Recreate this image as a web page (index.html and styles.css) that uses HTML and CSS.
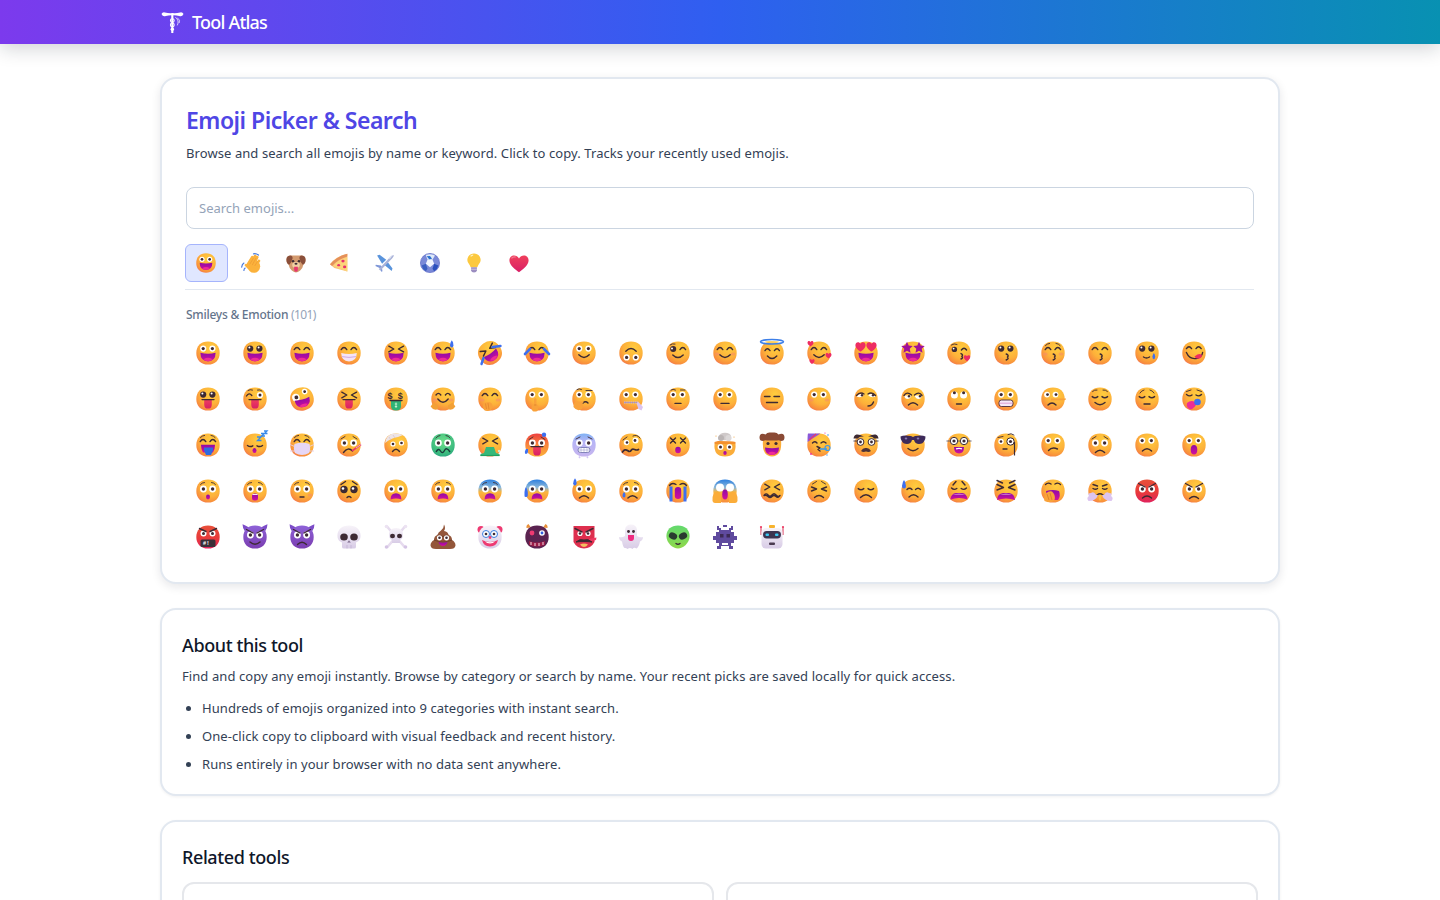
FILE: index.html
```html
<!DOCTYPE html>
<html lang="en">
<head>
<meta charset="utf-8">
<title>Emoji Picker &amp; Search - Tool Atlas</title>
<link rel="stylesheet" href="styles.css">
</head>
<body>
<svg class="defs" aria-hidden="true">
<defs>
<radialGradient id="gf" cx=".62" cy=".3" r=".8"><stop offset="0" stop-color="#ffcd3e"/><stop offset=".55" stop-color="#fdb13a"/><stop offset=".85" stop-color="#f88d3c"/><stop offset="1" stop-color="#ee6d62"/></radialGradient>
<radialGradient id="gg" cx=".5" cy=".35" r=".8"><stop offset="0" stop-color="#6fe08a"/><stop offset=".7" stop-color="#37b77e"/><stop offset="1" stop-color="#1f8f80"/></radialGradient>
<linearGradient id="gl" x1="0" y1="0" x2="0" y2="1"><stop offset="0" stop-color="#62d96e"/><stop offset="1" stop-color="#8fd84a"/></linearGradient>
<linearGradient id="gr" x1="0" y1="0" x2="0" y2="1"><stop offset="0" stop-color="#e8503a"/><stop offset=".55" stop-color="#e83a3a"/><stop offset="1" stop-color="#e0245e"/></linearGradient>
<linearGradient id="gh" x1="0" y1="0" x2="0" y2="1"><stop offset="0" stop-color="#ee3f3f"/><stop offset=".5" stop-color="#f8853c"/><stop offset="1" stop-color="#fbb03a"/></linearGradient>
<linearGradient id="gc" x1="0" y1="0" x2="0" y2="1"><stop offset="0" stop-color="#7fb2f4"/><stop offset=".35" stop-color="#b7b5f6"/><stop offset="1" stop-color="#c6b5ef"/></linearGradient>
<linearGradient id="gb" x1="0" y1="0" x2="0" y2="1"><stop offset="0" stop-color="#2b7fe0"/><stop offset=".35" stop-color="#8db8d8"/><stop offset=".55" stop-color="#fbb53c"/><stop offset="1" stop-color="#f88d3c"/></linearGradient>
<linearGradient id="gp" x1="0" y1="0" x2="0" y2="1"><stop offset="0" stop-color="#8e62d8"/><stop offset="1" stop-color="#7a3db0"/></linearGradient>
<linearGradient id="gm" x1="0" y1="0" x2="0" y2="1"><stop offset="0" stop-color="#8f0aa8"/><stop offset="1" stop-color="#d4109a"/></linearGradient>
<linearGradient id="gs" x1="0" y1="0" x2="0" y2="1"><stop offset="0" stop-color="#f7f3f9"/><stop offset="1" stop-color="#d8cce6"/></linearGradient>
<linearGradient id="gt" x1="0" y1="0" x2="0" y2="1"><stop offset="0" stop-color="#f0405c"/><stop offset="1" stop-color="#d81f66"/></linearGradient>
<path id="shape" d="M12 .4C19.2.4 23.7 4.8 23.7 12S19.2 23.6 12 23.6.3 19.2.3 12 4.8.4 12 .4z"/>
<use id="f" href="#shape" fill="url(#gf)"/>
<use id="fg" href="#shape" fill="url(#gg)"/>
<use id="fr" href="#shape" fill="url(#gr)"/>
<use id="fh" href="#shape" fill="url(#gh)"/>
<use id="fc" href="#shape" fill="url(#gc)"/>
<use id="fb" href="#shape" fill="url(#gb)"/>
<use id="fp" href="#shape" fill="url(#gp)"/>
<g id="ew"><circle cx="7.2" cy="7.6" r="3.1" fill="#fff"/><circle cx="16.4" cy="7.6" r="3.1" fill="#fff"/><circle cx="7.2" cy="7.6" r="1.6" fill="#3d2a33"/><circle cx="16.4" cy="7.6" r="1.6" fill="#3d2a33"/></g>
<g id="el"><circle cx="7.4" cy="10" r="3.4" fill="#fff"/><circle cx="16.6" cy="10" r="3.4" fill="#fff"/><circle cx="7.4" cy="10" r="1.7" fill="#3d2a33"/><circle cx="16.6" cy="10" r="1.7" fill="#3d2a33"/></g>
<g id="ed"><circle cx="7.2" cy="7.6" r="3.1" fill="#3d2a33"/><circle cx="16.4" cy="7.6" r="3.1" fill="#3d2a33"/><circle cx="6.4" cy="6.6" r="1" fill="#fff"/><circle cx="15.6" cy="6.6" r="1" fill="#fff"/></g>
<path id="eh" class="s" d="M4.2 8.6Q7 4.4 9.8 8.6M14 8.6Q16.8 4.4 19.6 8.6"/>
<path id="ex" class="s" d="M4.8 5.2 9.8 8 4.8 10.8M19.6 5.2 14.4 8 19.6 10.8"/>
<path id="ec" class="s" d="M4.2 9.6Q7 12 9.8 9.6M14 9.6Q16.8 12 19.6 9.6"/>
<path id="bw" class="t" d="M4.4 4.6Q6 2.6 8.6 2.4M15 2.4Q17.6 2.6 19.2 4.6"/>
<path id="ms" class="s" d="M6.8 13.8Q12 19.2 17.2 13.8"/>
<path id="mn" class="s" d="M8 16.4H16"/>
<path id="mf" class="s" d="M7.4 18Q12 13.4 16.6 18"/>
<path id="mk" class="s" d="M12.2 13Q15.4 14.4 13.4 16Q15.4 17.6 12.2 19"/>
<g id="mo"><path d="M4.4 11.8Q12 13.6 19.6 11.8Q19.6 20.4 12 20.4T4.4 11.8z" fill="url(#gm)"/><path d="M7.6 18.2Q12 15.4 16.4 18.2Q14.4 20.2 12 20.2T7.6 18.2z" fill="#ee2c96"/></g>
<g id="mg"><path d="M4.2 12Q12 13.8 19.8 12Q19.6 20.4 12 20.4T4.2 12z" fill="#f4e4f8"/><path d="M4.8 15.6Q12 17.2 19.2 15.6" fill="none" stroke="#c79ad8" stroke-width=".8"/></g>
<ellipse id="ma" cx="12" cy="17.4" rx="2" ry="2.5" fill="url(#gm)"/>
<path id="mw" d="M6.6 20.4Q6.6 14.2 12 14.2T17.4 20.4Q12 18.6 6.6 20.4z" fill="url(#gm)"/>
<g id="mt"><path d="M6 12.2H18V12.8H15.8V17.4Q15.8 21.6 12 21.6T8.2 17.4V12.8H6z" fill="url(#gt)"/><path class="s" d="M6 12.6H18"/></g>
<g id="sw"><path d="M19 4.2Q19.4.6 20.8-.8Q22.4.6 22.4 4.2Q22.2 6.4 20.7 6.4T19 4.2z" fill="#3d6ff0"/></g>
<g id="sl"><path d="M1.2 4.2Q1.6.6 3-.8Q4.6.6 4.6 4.2Q4.4 6.4 2.9 6.4T1.2 4.2z" fill="#3d6ff0"/></g>
<path id="he" d="M0 -1.6C.6-3 3-3 3-.8 3 1 1 2.2 0 3-1 2.2-3 1-3-.8-3-3-.6-3 0-1.6z" fill="#ee2c62"/>
<ellipse id="bl" cx="4.2" cy="13" rx="2.4" ry="1.6" fill="#f58a6a" opacity=".55"/>
<ellipse id="br" cx="20" cy="13" rx="2.4" ry="1.6" fill="#f58a6a" opacity=".55"/>
<path id="star" d="M0-4.4 1.3-1.6 4.4-1.2 2.1.9 2.7 4 0 2.5-2.7 4-2.1.9-4.4-1.2-1.3-1.6z" fill="#a0109a"/>
<path id="horn" d="M1.8 6Q-.6 3-.4-.8 3 .4 6 2.6zM22.2 6Q24.6 3 24.4-.8 21 .4 18 2.6z" fill="#7c4cc8"/>
</defs>
</svg>

<header class="topbar">
  <div class="topbar-inner">
    <svg class="logo" viewBox="0 0 24 24" aria-hidden="true">
      <path d="M.5 3.200Q1.500 1 4 1.500 8 2.600 12 2.200 16 2.600 20 1.500 22.500 1 23.500 3.200 22 6.400 19 5.200 15.500 4.400 12 4.600 8.500 4.400 5 5.200 2 6.400.5 3.200z" fill="#fff"/>
      <path d="M11.800 4V23" stroke="#fff" stroke-width="2.200"/>
      <circle cx="11.800" cy="10" r="2" fill="none" stroke="#fff" stroke-width="1.100"/>
      <circle cx="11.800" cy="14.500" r="2" fill="none" stroke="#fff" stroke-width="1.100"/>
      <circle cx="11.800" cy="19" r="1.800" fill="#fff"/>
      <path d="M15 6.500Q19.500 10 17 15M17 7Q20.500 9.500 19 12.500" fill="none" stroke="#fff" stroke-width="1" opacity=".75"/>
    </svg>
    <span class="brand">Tool Atlas</span>
  </div>
</header>

<main class="page">
  <section class="card card-main">
    <h1 class="tool-title">Emoji Picker &amp; Search</h1>
    <p class="tool-desc">Browse and search all emojis by name or keyword. Click to copy. Tracks your recently used emojis.</p>
    <input class="search" type="text" placeholder="Search emojis...">
    <nav class="tabs">
      <button class="tab active"><svg viewBox="0 0 24 24"><use href="#f"/><use href="#ew"/><use href="#mo"/></svg></button>
      <button class="tab"><svg viewBox="0 0 24 24"><ellipse cx="15.500" cy="16" rx="7.500" ry="7.800" fill="#fbb23c"/><path d="M8.500 13 13.500 5M11 15 17 3.500M14 16 19.500 5M17 17 21.500 9.500M9.500 18 6 14.500" stroke="#fbb23c" stroke-width="3.200" stroke-linecap="round"/><path d="M10.500 13.500 15 6M13.500 14.500 18 6M16.500 15.500 20 10" stroke="#ea9330" stroke-width=".7"/><path d="M.8 17Q1.200 13.500 3.500 12M3.500 21Q3.500 19 5 18M15 1Q18 .2 21 2.500" fill="none" stroke="#4a7bdd" stroke-width="1.400" stroke-linecap="round"/></svg></button>
      <button class="tab"><svg viewBox="0 0 24 24"><path d="M6 3H18Q23 3 23.500 8 23.500 12 21 13.500 20 19 17 21 14 23.500 12 23.500T7 21Q4 19 3 13.500 .5 12 .5 8 1 3 6 3z" fill="#d39a6e"/><path d="M6 3Q.5 3 .5 8 .5 13 4 14 7 11 8 6 8 4 6 3zM18 3Q23.500 3 23.500 8 23.500 13 20 14 17 11 16 6 16 4 18 3z" fill="#8a4f3a"/><circle cx="8.500" cy="10" r="1.500" fill="#3d2a33"/><circle cx="15.500" cy="10" r="1.500" fill="#3d2a33"/><ellipse cx="12" cy="14.400" rx="4.600" ry="3.600" fill="#f0cfa4"/><ellipse cx="12" cy="13" rx="1.800" ry="1.200" fill="#3d2a33"/><path d="M9.800 16.400H14.200V20Q14.200 22.400 12 22.400T9.800 20z" fill="#e8356e"/></svg></button>
      <button class="tab"><svg viewBox="0 0 24 24"><g transform="translate(-1.300 -.8) scale(1.300 1.100)"><path d="M1 13Q6 4.500 17 1.500V21L5 17z" fill="#f8c27a"/><path d="M4 15Q8 8 17 5V21z" fill="#fcd47a"/><path d="M1 13Q8 4 17 1.500V4.500Q8 7.500 3 15z" fill="#e5905a"/><circle cx="13" cy="9.500" r="1.500" fill="#e82f6e"/><circle cx="9" cy="14" r="1.300" fill="#e82f6e"/><circle cx="14.500" cy="16" r="1.500" fill="#e82f6e"/></g></svg></button>
      <button class="tab"><svg viewBox="0 0 24 24"><path d="M13.500 8 5.500 2 2.500 3 8.500 13zM15 10.500 21 18.500 20 21.500 11 14z" fill="#5a94dc"/><path d="M7 15 1 14 .5 15.500 5.500 18 7.500 22.500 9 22 8 16z" fill="#7f97d8"/><path d="M4.500 19.500 18.500 4.500Q21 2 22.500 2.500 23 4 20.500 6.500L6.500 21z" fill="#aab3d8"/><path d="M16.500 7 18.500 4.500Q21 2 22.500 2.500 20 3.500 18 7z" fill="#e3e7f6"/></svg></button>
      <button class="tab"><svg viewBox="0 0 24 24"><circle cx="12" cy="12" r="11.500" fill="#7a89d8"/><circle cx="12" cy="12" r="11.500" fill="none" stroke="#5a66c4" stroke-width=".8"/><path d="M7 2.500Q12 .5 18 3L15 8H9z" fill="#dfeaf8"/><path d="M9 8H15L17 13 12 17 7 13z" fill="#f2f5fd"/><path d="M2 15 7 13 9 19 7 22Q3 20 2 15z" fill="#3a5ec0"/><path d="M22 15 17 13 15 19 17 22Q21 20 22 15z" fill="#2b50bc"/><path d="M8 4 11 7.500 14.500 7 12 3.500z" fill="#2a6fce"/></svg></button>
      <button class="tab"><svg viewBox="0 0 24 24"><path d="M12 .5C17 .5 20 4.500 20 8.500 20 12 17 13.500 16 17H8C7 13.500 4 12 4 8.500 4 4.500 7 .5 12 .5z" fill="#fcc93f"/><path d="M8 4Q9 2.500 11 2.500" fill="none" stroke="#fff2c0" stroke-width="1.500"/><path d="M8.500 17H15.500V21Q15 23.500 12 23.500T8.500 21z" fill="#9b8dc0"/><path d="M8.500 19.500H15.500" stroke="#d6cde8"/></svg></button>
      <button class="tab"><svg viewBox="0 0 24 24"><path d="M12 6.500C14.500 1.500 23.500 1.500 23.500 9 23.500 15 16 20 12 23 8 20 .5 15 .5 9 .5 1.500 9.500 1.500 12 6.500z" fill="url(#gt)"/><path d="M3 6.500Q5 4 8 5" fill="none" stroke="#f47a92" stroke-width="1.500"/></svg></button>
    </nav>
    <h2 class="group-label">Smileys &amp; Emotion <span class="count">(101)</span></h2>
    <div class="emoji-grid">
      <!-- row 1 -->
      <button class="emoji"><svg viewBox="0 0 24 24"><use href="#f"/><use href="#ew"/><use href="#mo"/></svg></button>
      <button class="emoji"><svg viewBox="0 0 24 24"><use href="#f"/><use href="#ed"/><use href="#mo"/></svg></button>
      <button class="emoji"><svg viewBox="0 0 24 24"><use href="#f"/><use href="#eh"/><use href="#mo"/></svg></button>
      <button class="emoji"><svg viewBox="0 0 24 24"><use href="#f"/><use href="#eh"/><use href="#mg"/></svg></button>
      <button class="emoji"><svg viewBox="0 0 24 24"><use href="#f"/><use href="#ex"/><use href="#mo"/></svg></button>
      <button class="emoji"><svg viewBox="0 0 24 24"><use href="#f"/><use href="#eh"/><use href="#mo"/><use href="#sw"/></svg></button>
      <button class="emoji"><svg viewBox="0 0 24 24"><g transform="rotate(-35 12 12)"><use href="#f"/><use href="#ex"/><use href="#mo"/></g><path d="M14.500 6 22.500 5M5.500 17 3.500 23" stroke="#3d6ff0" stroke-width="2.400" stroke-linecap="round"/></svg></button>
      <button class="emoji"><svg viewBox="0 0 24 24"><use href="#f"/><use href="#eh"/><use href="#mo"/><path d="M19 8 24 13M5 8 0 13" stroke="#3d6ff0" stroke-width="2.600" stroke-linecap="round"/></svg></button>
      <button class="emoji"><svg viewBox="0 0 24 24"><use href="#f"/><use href="#ew"/><use href="#ms"/></svg></button>
      <button class="emoji"><svg viewBox="0 0 24 24"><use href="#f"/><g transform="rotate(180 12 12)"><use href="#ew"/><use href="#ms"/></g></svg></button>
      <button class="emoji"><svg viewBox="0 0 24 24"><use href="#f"/><circle cx="7.200" cy="8" r="3" fill="#3d2a33"/><circle cx="6" cy="7.500" r="1" fill="#fff"/><path class="s" d="M14 8.600Q16.800 4.400 19.600 8.600M6.800 14Q12 19.200 17.200 14"/><path class="t" d="M4 4Q6 2.200 9 3"/></svg></button>
      <button class="emoji"><svg viewBox="0 0 24 24"><use href="#f"/><use href="#eh"/><use href="#ms"/><use href="#br"/><use href="#bl"/></svg></button>
      <button class="emoji"><svg viewBox="0 0 24 24"><use href="#f"/><path class="s" d="M5 9.600Q7.400 6 10 9.600M14.400 9.600Q17 6 19.400 9.600M7.400 15Q12 20 16.800 15"/><ellipse cx="12" cy=".8" rx="11.500" ry="2.200" fill="none" stroke="#3d7fe8" stroke-width="1.500"/><ellipse cx="12" cy=".8" rx="7" ry=".9" fill="#fcd464"/></svg></button>
      <button class="emoji"><svg viewBox="0 0 24 24"><use href="#f"/><use href="#eh"/><use href="#ms"/><use href="#he" transform="translate(3.500 2.500)"/><use href="#he" transform="translate(21.500 14.500)"/><use href="#he" transform="translate(5 20.500) scale(.85)"/></svg></button>
      <button class="emoji"><svg viewBox="0 0 24 24"><use href="#f"/><use href="#mo"/><use href="#he" transform="translate(6.500 5.500) scale(1.700)"/><use href="#he" transform="translate(17.500 5.500) scale(1.700)"/></svg></button>
      <button class="emoji"><svg viewBox="0 0 24 24"><use href="#f"/><use href="#mo"/><use href="#star" transform="translate(6 6.500) scale(1.300)"/><use href="#star" transform="translate(18 6.500) scale(1.300)"/></svg></button>
      <button class="emoji"><svg viewBox="0 0 24 24"><use href="#f"/><circle cx="7.400" cy="8.400" r="2.700" fill="#3d2a33"/><circle cx="6.600" cy="7.600" r=".9" fill="#fff"/><path class="s" d="M14.400 9Q17 5.400 19.600 9M14 12.600Q16.600 13.800 14.800 15.400 16.600 17 14 18"/><path class="t" d="M4.400 4Q7 2 10 3.400"/><use href="#he" transform="translate(20 17) scale(1.100)"/></svg></button>
      <button class="emoji"><svg viewBox="0 0 24 24"><use href="#f"/><use href="#ed"/><use href="#mk"/></svg></button>
      <button class="emoji"><svg viewBox="0 0 24 24"><use href="#f"/><use href="#eh"/><use href="#bw"/><use href="#mk"/><use href="#bl"/><use href="#br"/></svg></button>
      <button class="emoji"><svg viewBox="0 0 24 24"><use href="#f"/><use href="#eh"/><use href="#mk"/></svg></button>
      <button class="emoji"><svg viewBox="0 0 24 24"><use href="#f"/><use href="#ed"/><path class="s" d="M8.500 16Q11.500 18 14.500 16"/><path d="M17.400 15.600Q18 13 18.800 12 20 13 20.200 15.600 20.200 18.200 18.800 18.200T17.400 15.600z" fill="#3d6ff0"/></svg></button>
      <button class="emoji"><svg viewBox="0 0 24 24"><use href="#f"/><path class="s" d="M4.400 7.600Q7 4 9.600 7.600M14 7.600Q16.600 4 19.200 7.600M4.400 11.500Q8 19.500 16 17 20 15.500 20.600 11.500"/><path d="M12.500 15.500Q17 12 19.500 13.500 21 16 17.500 17.500 14.500 18.500 12.500 15.500z" fill="#ee2c62"/></svg></button>
      <!-- row 2 -->
      <button class="emoji"><svg viewBox="0 0 24 24"><use href="#f"/><use href="#ed"/><use href="#mt"/></svg></button>
      <button class="emoji"><svg viewBox="0 0 24 24"><use href="#f"/><path class="s" d="M3.500 9Q6 5 8.800 8.500"/><path class="t" d="M5 3.500Q7 2 9.500 3M14.500 3Q17 2.200 19 4"/><circle cx="17" cy="8" r="3.100" fill="#fff"/><circle cx="17" cy="8" r="1.500" fill="#3d2a33"/><use href="#mt"/></svg></button>
      <button class="emoji"><svg viewBox="0 0 24 24"><g transform="rotate(-15 12 12)"><use href="#f"/><circle cx="6.500" cy="9" r="3.800" fill="#fff"/><circle cx="7" cy="9" r="1.900" fill="#3d2a33"/><circle cx="16.500" cy="5.500" r="2.800" fill="#fff"/><circle cx="16.500" cy="5.500" r="1.400" fill="#3d2a33"/><use href="#mo"/></g></svg></button>
      <button class="emoji"><svg viewBox="0 0 24 24"><use href="#f"/><use href="#ex"/><use href="#mt"/></svg></button>
      <button class="emoji"><svg viewBox="0 0 24 24"><use href="#f"/><text class="dollar" x="3.600" y="11.500">$</text><text class="dollar" x="13.800" y="11.500">$</text><path d="M7 13.500H17V19Q17 23.500 12 23.500T7 19z" fill="#2fb276"/><path class="s" d="M6 13.500H18"/><path d="M12 15.500V21M10.800 17H13.200M10.800 19.500H13.200" stroke="#d6f7dc" stroke-width=".8"/></svg></button>
      <button class="emoji"><svg viewBox="0 0 24 24"><use href="#f"/><path class="s" d="M5 8Q7.400 4.800 9.800 8M14.400 8Q16.800 4.800 19.200 8M6.800 12Q12 18.400 17.200 12"/><use href="#bl"/><use href="#br"/><path d="M-.4 19.500 2.500 15.500 7 18.500 7 22Q3 24.500-.4 19.500z" fill="#f2a036"/><path d="M24.400 19.500 21.500 15.500 17 18.500 17 22Q21 24.500 24.400 19.500z" fill="#f2a036"/></svg></button>
      <button class="emoji"><svg viewBox="0 0 24 24"><use href="#f"/><use href="#eh"/><use href="#br"/><use href="#bl"/><path d="M6 23Q4 20 5 17.500 7 15 10 15 14 15 14.500 18.500 14.500 23 11 23.800 8 24.500 6 23z" fill="#f9a23a"/><path d="M7.500 16.500 8.500 22M10 16 11 22.500" stroke="#e07f2e" stroke-width=".7"/></svg></button>
      <button class="emoji"><svg viewBox="0 0 24 24"><use href="#f"/><use href="#ew"/><path d="M7.500 24Q6 20 7 18L9 17.500V12.500Q9 11 10.200 11 11.500 11 11.500 12.500V17.500L13 18Q14 21 12.500 24 9.500 25 7.500 24z" fill="#f9a23a"/><path d="M9.200 18H11.300" stroke="#d67c2a" stroke-width=".7"/></svg></button>
      <button class="emoji"><svg viewBox="0 0 24 24"><use href="#f"/><use href="#ew"/><path class="t" d="M5 2.500Q7 1 9.500 2.500M14 3.500 20 3.500"/><path class="s" d="M11 16Q13.500 13.500 16 16"/><path d="M1.500 20Q1 16.500 3 15 5 14 6 14.500L11.500 14.500Q12 16 10 16.500 12 18 10 22 5 25 1.500 20z" fill="#f9a23a"/></svg></button>
      <button class="emoji"><svg viewBox="0 0 24 24"><use href="#f"/><use href="#ew"/><path d="M5 15.500H19" stroke="#c7b7e8" stroke-width="2.200" stroke-dasharray="1.500 .7"/><path d="M5 15.500H19" stroke="#8a7bc0" stroke-width=".5"/><path d="M19 14.500 24 20 22.500 23.500 19.500 22 17.500 16.500z" fill="#dcc4f0"/></svg></button>
      <button class="emoji"><svg viewBox="0 0 24 24"><use href="#f"/><use href="#ew"/><path class="t" d="M5 3Q7 1.500 9.500 3M14.500 3H19"/><path class="s" d="M9 16.400H15"/></svg></button>
      <button class="emoji"><svg viewBox="0 0 24 24"><use href="#f"/><use href="#ew"/><use href="#mn"/></svg></button>
      <button class="emoji"><svg viewBox="0 0 24 24"><use href="#f"/><path class="s" d="M4.500 9.500H10M14 9.500H19.500M6.500 15.500H17.500"/></svg></button>
      <button class="emoji"><svg viewBox="0 0 24 24"><use href="#f"/><use href="#ew"/><use href="#bl"/><use href="#br"/></svg></button>
      <button class="emoji"><svg viewBox="0 0 24 24"><use href="#f"/><path d="M2.500 9.500Q6 5.500 10 8 7 11.500 2.500 9.500zM14 8Q18 5.500 21.500 9.500 17 11.500 14 8z" fill="#fff"/><circle cx="8" cy="8.300" r="1.200" fill="#3d2a33"/><circle cx="19" cy="8.300" r="1.200" fill="#3d2a33"/><path class="s" d="M2.500 8.500Q6 4.500 10 7M14 7Q18 4.500 21.500 8.500M14 19Q18 19 19.500 15"/></svg></button>
      <button class="emoji"><svg viewBox="0 0 24 24"><use href="#f"/><path d="M3 8.500H10.500Q9 12 6.500 12T3 8.500zM13.500 8.500H21Q20 12 17.500 12T13.500 8.500z" fill="#fff"/><circle cx="8" cy="9.300" r="1.200" fill="#3d2a33"/><circle cx="19" cy="9.300" r="1.200" fill="#3d2a33"/><path class="s" d="M3 8.500Q6 4 10.500 8M13.500 8Q18 4 21 8.500"/><use href="#mf"/></svg></button>
      <button class="emoji"><svg viewBox="0 0 24 24"><use href="#f"/><circle cx="7.400" cy="8" r="3.500" fill="#fff"/><circle cx="16.600" cy="8" r="3.500" fill="#fff"/><circle cx="7.400" cy="5.800" r="1.500" fill="#3d2a33"/><circle cx="16.600" cy="5.800" r="1.500" fill="#3d2a33"/><path class="s" d="M9.500 17H14.500"/></svg></button>
      <button class="emoji"><svg viewBox="0 0 24 24"><use href="#f"/><use href="#ew"/><rect x="5" y="13" width="14" height="6.500" rx="2.500" fill="#f6e8f8" stroke="#4a2a3c" stroke-width=".9"/><path d="M5.500 16.200H18.500" stroke="#d88ac8" stroke-width=".8"/></svg></button>
      <button class="emoji"><svg viewBox="0 0 24 24"><use href="#f"/><circle cx="6" cy="7.600" r="2.900" fill="#fff"/><circle cx="14.500" cy="7.600" r="2.900" fill="#fff"/><circle cx="6.500" cy="7.600" r="1.400" fill="#3d2a33"/><circle cx="15" cy="7.600" r="1.400" fill="#3d2a33"/><path d="M10 11.500 25 11.500Q25 13 23.500 13.300L10 13.500z" fill="#f9a23a"/><path class="s" d="M7 18Q11 14 15 18"/></svg></button>
      <button class="emoji"><svg viewBox="0 0 24 24"><use href="#f"/><path class="t" d="M4.500 4.500Q6.500 2.500 9 3M15 3Q17.500 2.500 19.500 4.500"/><use href="#ec"/><path class="s" d="M7 15.500Q12 20 17 15.500"/></svg></button>
      <button class="emoji"><svg viewBox="0 0 24 24"><use href="#f"/><path class="t" d="M5 6Q6.500 3.500 9 3M15 3Q17.500 3.500 19 6"/><use href="#ec"/><path class="s" d="M9 17H15"/></svg></button>
      <button class="emoji"><svg viewBox="0 0 24 24"><use href="#f"/><path class="s" d="M4.500 7.500Q7.500 10 10 8M14 8Q17 10 19.500 7.500"/><path class="t" d="M4.500 4.500 9 3M15 3 19.500 4.500"/><path d="M5 16Q9 12.500 13 15 15 17 13 19.500 10 23 7.500 22Q4 20 5 16z" fill="#ee2c96"/><circle cx="15.500" cy="15" r="3.300" fill="#3d6ff0"/></svg></button>
      <!-- row 3 -->
      <button class="emoji"><svg viewBox="0 0 24 24"><use href="#f"/><use href="#eh"/><use href="#bw"/><path d="M5 11.800H19Q19 17 17 19.500H7Q5 17 5 11.800z" fill="url(#gm)"/><path d="M8 14.500H17V17.500L15 22H10L8 17.500z" fill="#2f6ae0"/></svg></button>
      <button class="emoji"><svg viewBox="0 0 24 24"><use href="#f"/><path class="s" d="M4.500 12.500Q7 14.500 9.800 12.800M14 12.800Q17 14.500 19.500 12.500"/><use href="#ma" transform="translate(-.500 0)"/><path d="M14 4 18 4 14.500 7.500H18.500M18 .5H21.500L18.500 3H22M21-2H24L21.500.5H24.500" fill="none" stroke="#3a8be8" stroke-width="1.300"/></svg></button>
      <button class="emoji"><svg viewBox="0 0 24 24"><use href="#f"/><use href="#eh"/><use href="#bw"/><path d="M4.500 11Q12 8.500 19.500 11 21 16 19 20 12 24 5 20 3 16 4.500 11z" fill="#e6d6f5"/><path d="M0 11.500 4.500 13.500M0 18 5 18M24 11.500 19.500 13.500M24 18 19 18" stroke="#e8cfe8" stroke-width=".9"/></svg></button>
      <button class="emoji"><svg viewBox="0 0 24 24"><use href="#f"/><use href="#el"/><path class="t" d="M4 6 8 3.500M20 6 16 3.500"/><path class="s" d="M6.500 19.500Q11 13.500 15.500 18"/><path d="M15 18 24 11.500" stroke="#e83a6a" stroke-width="1.600"/><path d="M19 15 24 11.500" stroke="#f5d4c8" stroke-width=".8"/></svg></button>
      <button class="emoji"><svg viewBox="0 0 24 24"><use href="#f"/><circle cx="9" cy="11" r="2.600" fill="#fff"/><circle cx="17.500" cy="10" r="2.600" fill="#fff"/><circle cx="9" cy="11" r="1.300" fill="#3d2a33"/><circle cx="17.500" cy="10" r="1.300" fill="#3d2a33"/><path class="s" d="M8.500 18.500Q12 14 15.500 18.500"/><path d="M1 10Q2 2 9 .5 16 0 19 2L14 4Q7 5 1 10z" fill="#ede4e6"/><path d="M5 4 7 7M9 2 11 5" stroke="#d8c4c8" stroke-width=".8"/></svg></button>
      <button class="emoji"><svg viewBox="0 0 24 24"><use href="#fg"/><use href="#el"/><path class="t" d="M5 5Q6.500 2.500 9 2.500M15 2.500Q17.500 2.500 19 5"/><path d="M5 19Q7.500 14.500 9.500 18T13.500 17.500 19 19" fill="none" stroke="#1a3a3a" stroke-width="1.400"/></svg></button>
      <button class="emoji"><svg viewBox="0 0 24 24"><use href="#f"/><use href="#ex"/><path d="M8 14H16L18 20 21.500 21V23H2.500V21L6 20z" fill="#35b87a"/><path d="M2.500 22.500H21.500" stroke="#1fa060" stroke-width="1.200"/><circle cx="21" cy="18" r="1.200" fill="#cfeeda"/></svg></button>
      <button class="emoji"><svg viewBox="0 0 24 24"><use href="#fh"/><use href="#el"/><path class="t" d="M4 6.500 8 4M20 6.500 16 4"/><use href="#mt" transform="translate(0 1)"/><circle cx="19" cy="1.800" r="2.200" fill="#3d6ff0"/><path d="M1 16Q-1 19 .5 21 3 21 3 18V16z" fill="#3d6ff0"/></svg></button>
      <button class="emoji"><svg viewBox="0 0 24 24"><use href="#fc"/><use href="#el"/><path class="t" d="M4 6 8 4M20 6 16 4"/><rect x="6" y="14.500" width="12" height="5" rx="2.500" fill="#fff" stroke="#6a6ca8" stroke-width=".8"/><path d="M6.500 17H17.500M9 14.500V19.500M12 14.500V19.500M15 14.500V19.500" stroke="#8c8ec4" stroke-width=".5"/><path d="M7 23.500 8 25M16 23.500 15 25" stroke="#d2c4f5" stroke-width="1.500"/></svg></button>
      <button class="emoji"><svg viewBox="0 0 24 24"><use href="#f"/><circle cx="7.500" cy="9.500" r="2.700" fill="#fff"/><circle cx="16.500" cy="7.500" r="3" fill="#fff"/><circle cx="8" cy="9.500" r="1.300" fill="#3d2a33"/><circle cx="16" cy="7.500" r="1.400" fill="#3d2a33"/><path class="t" d="M4 7 8 4M14 3Q18 1 21 5"/><path d="M3.500 19Q6 15.500 8.500 17.500T12 17.500 15.500 16.500 19.500 16.500" fill="none" stroke="#3d2a33" stroke-width="1.700" stroke-linecap="round"/></svg></button>
      <button class="emoji"><svg viewBox="0 0 24 24"><use href="#f"/><path class="s" d="M4.500 5 9.500 10M9.500 5 4.500 10M14.500 5 19.500 10M19.500 5 14.500 10"/><ellipse cx="12" cy="17" rx="2.800" ry="3.300" fill="url(#gm)"/></svg></button>
      <button class="emoji"><svg viewBox="0 0 24 24"><path d="M1.500 11H22.500Q23.500 23.500 12 23.500T1.500 11z" fill="#fbad3a"/><path d="M1.500 9 5 8Q19 8 22.500 9V11H1.500z" fill="#f3902e"/><ellipse cx="12" cy="3.500" rx="6" ry="3.800" fill="#cfc9c9"/><circle cx="8" cy="5" r="3" fill="#bab4b4"/><circle cx="15.500" cy="5" r="3.100" fill="#dcd8d8"/><circle cx="7.500" cy="14" r="2.900" fill="#fff"/><circle cx="16.500" cy="14" r="2.900" fill="#fff"/><circle cx="7.500" cy="14" r="1.500" fill="#3d2a33"/><circle cx="16.500" cy="14" r="1.500" fill="#3d2a33"/><ellipse cx="12" cy="20" rx="1.700" ry="2" fill="url(#gm)"/><circle cx="3" cy="3" r=".6" fill="#f3a33a"/><circle cx="21" cy="4" r=".6" fill="#f3a33a"/></svg></button>
      <button class="emoji"><svg viewBox="0 0 24 24"><path d="M3 7H21Q22.500 23.500 12 23.500T3 7z" fill="#fbad3a"/><path d="M-.5 4.500Q-.5 1 2.500 .8 4 .8 5.500 1.500 7 -.5 9.500-.5H14.500Q17 -.5 18.500 1.500 20 .8 21.500.8 24.500 1 24.500 4.500 24.500 8 21 8 19 7 17 7.500H7Q5 7 3 8-.5 8-.5 4.500z" fill="#8a4a35"/><circle cx="8" cy="10.500" r="1.600" fill="#3d2a33"/><circle cx="16" cy="10.500" r="1.600" fill="#3d2a33"/><path d="M5 14.500Q12 16 19 14.500 19 22 12 22T5 14.500z" fill="url(#gm)"/><path d="M8 20Q12 17.500 16 20 14 22 12 22T8 20z" fill="#ee2c96"/></svg></button>
      <button class="emoji"><svg viewBox="0 0 24 24"><use href="#f"/><path d="M.5 9Q.5 2 1 .5H9L13.500.5Q6 5 .5 9z" fill="#8a58d8"/><path d="M2 7 9 1" stroke="#e83a6a" stroke-width="1.200"/><path class="s" d="M5.500 10Q7.500 7.500 10 10M14 10Q16.500 7.500 19 10M10 13.500 13 15 11 16.500 13 18"/><path d="M13 16H20" stroke="#3d9be8" stroke-width="1.600"/><circle cx="20.500" cy="15" r="2.500" fill="none" stroke="#3d9be8" stroke-width="1.200"/><circle cx="21" cy="2" r=".8" fill="#3d9be8"/><circle cx="18" cy="0" r=".6" fill="#ee2c96"/><circle cx="4" cy="21" r=".9" fill="#ee2c96"/><circle cx="20" cy="22" r=".7" fill="#3d9be8"/></svg></button>
      <button class="emoji"><svg viewBox="0 0 24 24"><use href="#f"/><path d="M-.5 5.500Q0 2 2.500 1.500 5 1 10 3.500 5 3 4 5.500zM24.500 5.500Q24 2 21.500 1.500 19 1 14 3.500 19 3 20 5.500z" fill="#3d2a33"/><circle cx="6.500" cy="9" r="3.400" fill="#fff" stroke="#3d2a33" stroke-width="1"/><circle cx="17.500" cy="9" r="3.400" fill="#fff" stroke="#3d2a33" stroke-width="1"/><circle cx="6.500" cy="9" r="1.400" fill="#3d2a33"/><circle cx="17.500" cy="9" r="1.400" fill="#3d2a33"/><path d="M7 18Q9 14.500 12 15 15 14.500 17 18 15 19.500 12 18.500 9 19.500 7 18z" fill="#4a3138"/><path d="M-.5 8H3M24.500 8H21" stroke="#3d2a33" stroke-width=".9"/></svg></button>
      <button class="emoji"><svg viewBox="0 0 24 24"><use href="#f"/><path d="M-.5 3.500Q3 1.600 10 3L12 4 14 3Q21 1.600 24.500 3.500 24.500 6 23.500 7.500 22 11 18 11 14 11 13 7H11Q10 11 6 11 2 11 .5 7.500-.5 6-.5 3.500z" fill="#3d2a5a"/><ellipse cx="5" cy="5.500" rx="1.300" ry=".9" fill="#8878b0"/><ellipse cx="17" cy="5.500" rx="1.300" ry=".9" fill="#8878b0"/><path class="s" d="M7 15.500Q12 20 17 15.500"/></svg></button>
      <button class="emoji"><svg viewBox="0 0 24 24"><use href="#f"/><circle cx="7" cy="8" r="3.700" fill="#fff" stroke="#3d2a33" stroke-width="1"/><circle cx="17" cy="8" r="3.700" fill="#fff" stroke="#3d2a33" stroke-width="1"/><circle cx="7" cy="8" r="1.600" fill="#3d2a33"/><circle cx="17" cy="8" r="1.600" fill="#3d2a33"/><path d="M-.5 8H3.500M24.500 8H20.500M10.500 8H13.500" stroke="#6a6068" stroke-width="1"/><path d="M7 14H17Q17 20.500 12 20.500T7 14z" fill="url(#gm)"/><path d="M9 15.800Q12 15 15 15.800" stroke="#fff" stroke-width="1.200" fill="none"/></svg></button>
      <button class="emoji"><svg viewBox="0 0 24 24"><use href="#f"/><circle cx="7" cy="8.500" r="2.700" fill="#fff"/><circle cx="7" cy="8.500" r="1.300" fill="#3d2a33"/><circle cx="16.500" cy="8.500" r="3.700" fill="#fff" stroke="#3d2a33" stroke-width="1"/><circle cx="16.500" cy="8.500" r="1.600" fill="#3d2a33"/><path class="t" d="M4 4.500 9 3.500M14 1.500Q17 -.5 20 2"/><path class="s" d="M9 16H13"/><path d="M20.500 9V22.500" stroke="#3d2a33" stroke-width="1.200"/></svg></button>
      <button class="emoji"><svg viewBox="0 0 24 24"><use href="#f"/><use href="#ew"/><path class="s" d="M7.500 17.500Q11 13.500 16.500 16"/></svg></button>
      <button class="emoji"><svg viewBox="0 0 24 24"><use href="#f"/><use href="#el"/><path class="t" d="M4 6 8 3.500M20 6 16 3.500"/><use href="#mf" transform="translate(0 1.500)"/></svg></button>
      <button class="emoji"><svg viewBox="0 0 24 24"><use href="#f"/><use href="#ew"/><use href="#mf"/></svg></button>
      <button class="emoji"><svg viewBox="0 0 24 24"><use href="#f"/><use href="#ew"/><ellipse cx="12" cy="16.800" rx="3.300" ry="4.800" fill="url(#gm)"/></svg></button>
      <!-- row 4 -->
      <button class="emoji"><svg viewBox="0 0 24 24"><use href="#f"/><use href="#el"/><path class="t" d="M4.500 5.500Q6 3.500 8.500 3.500M15.500 3.500Q18 3.500 19.500 5.500"/><ellipse cx="12" cy="18" rx="2" ry="2.400" fill="url(#gm)"/></svg></button>
      <button class="emoji"><svg viewBox="0 0 24 24"><use href="#f"/><use href="#el"/><path class="t" d="M4.500 5.500Q6 3.500 8.500 3.500M15.500 3.500Q18 3.500 19.500 5.500"/><rect x="9" y="14.500" width="6" height="7" rx="2.500" fill="url(#gm)"/><path d="M9.500 15.500H14.500" stroke="#f4e4f8" stroke-width="1"/></svg></button>
      <button class="emoji"><svg viewBox="0 0 24 24"><use href="#f"/><use href="#el"/><path class="t" d="M4.500 5.500Q6 3.500 8.500 3.500M15.500 3.500Q18 3.500 19.500 5.500"/><path class="s" d="M10 18H14"/><use href="#br" transform="translate(0 3)"/></svg></button>
      <button class="emoji"><svg viewBox="0 0 24 24"><use href="#f"/><circle cx="7" cy="10.500" r="3.700" fill="#3d2a33"/><circle cx="17" cy="10.500" r="3.700" fill="#3d2a33"/><circle cx="6" cy="9.500" r="1.300" fill="#fff"/><circle cx="16" cy="9.500" r="1.300" fill="#fff"/><path class="s" d="M4 5.500 8.500 2.500M20 5.500 15.500 2.500M10 18.500Q12 16.500 14 18.500"/></svg></button>
      <button class="emoji"><svg viewBox="0 0 24 24"><use href="#f"/><use href="#el"/><use href="#mw"/></svg></button>
      <button class="emoji"><svg viewBox="0 0 24 24"><use href="#f"/><use href="#el"/><path class="t" d="M4.500 5.500Q6 3.500 8.500 3.500M15.500 3.500Q18 3.500 19.500 5.500"/><use href="#mw"/></svg></button>
      <button class="emoji"><svg viewBox="0 0 24 24"><use href="#fb"/><use href="#el"/><path class="t" d="M4.500 5.500Q6 3.500 8.500 3.500M15.500 3.500Q18 3.500 19.500 5.500"/><use href="#mw"/></svg></button>
      <button class="emoji"><svg viewBox="0 0 24 24"><use href="#fb"/><use href="#el"/><use href="#mw"/><path d="M-.5 13Q-.5 10 1 8 2.500 10 2.800 13V16.500Q2.800 18 1 18T-.5 16.500z" fill="#3d6ff0"/></svg></button>
      <button class="emoji"><svg viewBox="0 0 24 24"><use href="#f"/><use href="#el"/><use href="#sl"/><use href="#mf" transform="translate(0 1)"/></svg></button>
      <button class="emoji"><svg viewBox="0 0 24 24"><use href="#f"/><use href="#el"/><path class="t" d="M4.500 5.500Q6 3.500 8.500 3.500M15.500 3.500Q18 3.500 19.500 5.500"/><use href="#mf" transform="translate(1.500 1)"/><path d="M3.500 16Q4 14 5 13 6.500 14 6.500 16 6.500 18.500 5 18.500T3.500 16z" fill="#3d6ff0"/></svg></button>
      <button class="emoji"><svg viewBox="0 0 24 24"><use href="#f"/><path class="s" d="M3.500 6.500Q6 3 10 5.500M14 5.500Q18 3 20.500 6.500"/><path d="M3.500 7.500H6.500V22.500H3.500zM17.500 7.500H20.500V22.500H17.500z" fill="#3d6ff0"/><rect x="8.800" y="8" width="6.400" height="12" rx="3.200" fill="url(#gm)"/></svg></button>
      <button class="emoji"><svg viewBox="0 0 24 24"><use href="#fb"/><circle cx="7" cy="8.500" r="4" fill="#fff"/><circle cx="17" cy="8.500" r="4" fill="#fff"/><ellipse cx="12" cy="15.500" rx="2.800" ry="5" fill="url(#gm)"/><path d="M-.5 22Q-1 18 .5 15 3 12 6 13 9 18 8 24H2Q0 24-.5 22zM24.500 22Q25 18 23.500 15 21 12 18 13 15 18 16 24H22Q24 24 24.500 22z" fill="#fbad3a"/></svg></button>
      <button class="emoji"><svg viewBox="0 0 24 24"><use href="#f"/><use href="#ex"/><path class="s" d="M4 16.500Q6 13.500 8 16T12 16 16 16 20 16.500Q18 19.500 16 17.500T12 17.500 8 17.500 4 16.500z"/></svg></button>
      <button class="emoji"><svg viewBox="0 0 24 24"><use href="#f"/><path class="s" d="M4.500 8 9.500 10 4.500 12M19.500 8 14.500 10 19.500 12M7.500 18.500Q12 14.500 16.500 18.500"/><path class="t" d="M5.500 5Q8 3.500 9.500 2.500M14.500 2.500Q16 3.500 18.500 5"/></svg></button>
      <button class="emoji"><svg viewBox="0 0 24 24"><use href="#f"/><use href="#ec"/><path class="s" d="M6.500 18.500Q12 13 17.500 18.500"/></svg></button>
      <button class="emoji"><svg viewBox="0 0 24 24"><use href="#f"/><path class="s" d="M6 10.500Q8.500 8 11 10.500M14.500 10.500Q17 8 19.500 10.500M8 18Q12.500 13.500 17 18"/><path d="M1 7Q1.500 2.500 3 1 4.500 2.500 5 7 5 9.500 3 9.500T1 7z" fill="#3d6ff0"/></svg></button>
      <button class="emoji"><svg viewBox="0 0 24 24"><use href="#f"/><path class="s" d="M4.500 9Q7 11.500 9.800 9.500M14.200 9.500Q17 11.500 19.500 9M6 6 9 2.500M18 6 15 2.500"/><path d="M3.500 20.500Q4 14.500 9 14H15Q20 14.500 20.500 20.500Q12 17.500 3.500 20.500z" fill="url(#gm)"/><path d="M5.500 15.500H18.500Q12 14 5.500 15.500z" fill="#f4cfe8"/></svg></button>
      <button class="emoji"><svg viewBox="0 0 24 24"><use href="#f"/><path class="s" d="M3 5.500 9.500 8.500 3 11M21 5.500 14.500 8.500 21 11M3 1.500 8.500 4M21 1.500 15.500 4"/><path d="M3 21Q3.500 14.500 9 14H15Q20.500 14.500 21 21Q12 18 3 21z" fill="url(#gm)"/><path d="M6 15.500H18Q12 14 6 15.500z" fill="#f4cfe8"/></svg></button>
      <button class="emoji"><svg viewBox="0 0 24 24"><use href="#f"/><path class="s" d="M4.500 5.500Q7 3 10 5M14 5Q17 3 19.500 5.500"/><path d="M5 12Q12 10 18 12 20 17 17 21H8Q5 17 5 12z" fill="url(#gm)"/><path d="M3.500 22Q2.500 17 5 14.500 8 11.500 11 12.500 15 16.500 13.500 21 10 25 3.500 22z" fill="#f9a23a"/><path d="M6 15 8 21M9 14 11 21" stroke="#d67c2a" stroke-width=".8"/></svg></button>
      <button class="emoji"><svg viewBox="0 0 24 24"><use href="#f"/><path class="s" d="M5 5.500 9.500 7M19 5.500 14.500 7M5 9.500Q7.500 11 9.500 9.500M14.500 9.500Q17 11 19 9.500M9 16Q12 13.500 15 16"/><path d="M11 16H13V21Q12 22 11 21z" fill="#fbc03a"/><path d="M10 16Q8 22 .5 22-2 19 1 17-1 14 3 14 6 12 8 16zM14 16Q16 22 23.500 22 26 19 23 17 25 14 21 14 18 12 16 16z" fill="#dcc4f0"/></svg></button>
      <button class="emoji"><svg viewBox="0 0 24 24"><use href="#fr"/><use href="#el"/><path class="s" d="M3.500 4.500 10 8M20.500 4.500 14 8M7.500 19Q12 15 16.500 19"/></svg></button>
      <button class="emoji"><svg viewBox="0 0 24 24"><use href="#f"/><use href="#el"/><path class="s" d="M3.500 4.500 10 8M20.500 4.500 14 8M7.500 19.500Q12 15.500 16.500 19.500"/></svg></button>
      <!-- row 5 -->
      <button class="emoji"><svg viewBox="0 0 24 24"><use href="#fr"/><circle cx="7.500" cy="8.500" r="3" fill="#fff"/><circle cx="16.500" cy="8.500" r="3" fill="#fff"/><circle cx="7.500" cy="8.500" r="1.500" fill="#3d2a33"/><circle cx="16.500" cy="8.500" r="1.500" fill="#3d2a33"/><path class="s" d="M3.500 3.500 10 6.500M20.500 3.500 14 6.500"/><rect x="4.500" y="14.500" width="15" height="7.500" rx="1.500" fill="#3a3038"/><text class="sym" x="7" y="20.300">#!</text></svg></button>
      <button class="emoji"><svg viewBox="0 0 24 24"><use href="#horn"/><use href="#fp"/><use href="#el"/><path class="s" d="M3.500 4.500 10 8M20.500 4.500 14 8M7 17Q12 21.500 17 17"/></svg></button>
      <button class="emoji"><svg viewBox="0 0 24 24"><use href="#horn"/><use href="#fp"/><use href="#el"/><path class="s" d="M3.500 4.500 10 8M20.500 4.500 14 8M7.500 19.500Q12 15 16.500 19.500"/></svg></button>
      <button class="emoji"><svg viewBox="0 0 24 24"><path d="M12 .4C19 .4 23.600 4.500 23.600 10.500 23.600 14.500 21.500 16.500 19 17.500V22Q19 23.600 17 23.600H7Q5 23.600 5 22V17.500C2.500 16.500.4 14.500.4 10.500.4 4.500 5 .4 12 .4z" fill="url(#gs)"/><ellipse cx="7" cy="12" rx="3.800" ry="3.500" fill="#3d2a33"/><ellipse cx="17" cy="12" rx="3.800" ry="3.500" fill="#3d2a33"/><path d="M10.500 17.500 12 15.500 13.500 17.500zM10 20V23.500M14 20V23.500" fill="#4a3a50" stroke="#b9a8cc" stroke-width=".6"/></svg></button>
      <button class="emoji"><svg viewBox="0 0 24 24"><path d="M3 1.500 21 22.500M21 1.500 3 22.500" stroke="#e6dbee" stroke-width="2.600"/><circle cx="2.500" cy="1.500" r="1.800" fill="#ece3f2"/><circle cx="21.500" cy="1.500" r="1.800" fill="#ece3f2"/><circle cx="2.500" cy="22" r="1.800" fill="#d4c4e4"/><circle cx="21.500" cy="22" r="1.800" fill="#d4c4e4"/><path d="M12 3C17 3 19 6 19 10 19 13 17.500 14 16 15V18H8V15C6.500 14 5 13 5 10 5 6 7 3 12 3z" fill="url(#gs)"/><ellipse cx="8.500" cy="11" rx="2.500" ry="2.300" fill="#3d2a33"/><ellipse cx="15.500" cy="11" rx="2.500" ry="2.300" fill="#3d2a33"/></svg></button>
      <button class="emoji"><svg viewBox="0 0 24 24"><path d="M13-.5Q15 3 13 6 17 6.500 17.500 10 21 11 21 15 24.500 17 24.500 20.500 24 24 19 24H5Q0 24-.5 20.500-.5 17 3 15 3 11 6.500 10 7 7 10 5.500 13 3 13-.5z" fill="#93563a"/><path d="M6.500 10Q12 13 17.500 10M3 15Q12 19 21 15" fill="none" stroke="#6f3d2a" stroke-width=".9"/><circle cx="8.500" cy="12.800" r="2.600" fill="#fff"/><circle cx="15.500" cy="12.800" r="2.600" fill="#fff"/><circle cx="8.500" cy="12.800" r="1.300" fill="#3d2a33"/><circle cx="15.500" cy="12.800" r="1.300" fill="#3d2a33"/><path d="M7.500 17Q12 18.500 16.500 17 15.500 21 12 21T7.500 17z" fill="url(#gm)"/></svg></button>
      <button class="emoji"><svg viewBox="0 0 24 24"><circle cx="3" cy="4.500" r="3.500" fill="#ee3a72"/><circle cx="21" cy="4.500" r="3.500" fill="#ee3a72"/><use href="#shape" fill="url(#gs)"/><circle cx="8" cy="9" r="3.500" fill="#fff" stroke="#3d80e0" stroke-width="1"/><circle cx="16" cy="9" r="3.500" fill="#fff" stroke="#3d80e0" stroke-width="1"/><circle cx="8" cy="9" r="1.300" fill="#3d2a33"/><circle cx="16" cy="9" r="1.300" fill="#3d2a33"/><circle cx="12" cy="12.500" r="1.400" fill="#ee3a72"/><path d="M4 15Q12 19 20 15 18.500 21.500 12 21.500T4 15z" fill="#ee3a72"/><path d="M7 16.500Q12 18 17 16.500 15 18.500 12 18.500T7 16.500z" fill="#fff"/></svg></button>
      <button class="emoji"><svg viewBox="0 0 24 24"><path d="M1.500 3Q1 0 3.500-1 5 1 6 2.500ZM22.500 3Q23 0 20.500-1 19 1 18 2.500Z" fill="#e8903a"/><use href="#shape" fill="#5a2350"/><circle cx="7" cy="8" r="2.400" fill="#ee3a72"/><circle cx="17" cy="8" r="2.800" fill="#fff"/><circle cx="17" cy="8" r="1.400" fill="#3060e0"/><path d="M4 16Q12 19 20 16V20Q12 23 4 20z" fill="#9c1d48"/><path d="M6 17V20M10 18V21M14 18V21M18 17V20" stroke="#f2dce4"/></svg></button>
      <button class="emoji"><svg viewBox="0 0 24 24"><path d="M1.500 1H22.500V17Q19 23.500 12 23.500T1.500 17z" fill="#de2f4e"/><path d="M17 14 24.500 12.500 24 15 17 17z" fill="#ee3a62"/><circle cx="8" cy="8.500" r="2.600" fill="#fff"/><circle cx="16" cy="8.500" r="2.600" fill="#fff"/><circle cx="8" cy="8.500" r="1.300" fill="#3d2a33"/><circle cx="16" cy="8.500" r="1.300" fill="#3d2a33"/><path class="s" d="M3 3.500 10 7M21 3.500 14 7"/><path d="M4 17Q8 13.500 12 15 16 13.500 20 17 16 16.500 12 16.500T4 17z" fill="#3d2a33" stroke="#3d2a33"/><path d="M8 19.500Q12 17.500 16 19.500 14 22 12 22T8 19.500z" fill="#f4c060"/></svg></button>
      <button class="emoji"><svg viewBox="0 0 24 24"><path d="M6 5Q6.500 -.5 12-.5T18 5V11Q21 13 24 12 24 15 21 16.500 20 22 17.500 23.500 15 22 13.500 24 11 22 8.500 24 7 22.500 5.500 23 4 22 3 16.500 0 15 0 12 3 13 6 11z" fill="url(#gs)"/><circle cx="9.500" cy="6.500" r="1.400" fill="#3d2a33"/><circle cx="14.500" cy="6.500" r="1.400" fill="#3d2a33"/><path d="M9 10H15V13Q15 16 12 16T9 13z" fill="#ee2c80"/></svg></button>
      <button class="emoji"><svg viewBox="0 0 24 24"><path d="M12 .4C19 .4 23.600 4.500 23.600 11 23.600 18 17 23.600 12 23.600S.4 18 .4 11C.4 4.500 5 .4 12 .4z" fill="url(#gl)"/><ellipse cx="7" cy="11" rx="4.300" ry="3.300" transform="rotate(25 7 11)" fill="#2a3a30"/><ellipse cx="17" cy="11" rx="4.300" ry="3.300" transform="rotate(-25 17 11)" fill="#2a3a30"/><path class="s" d="M10 18.500Q12 20 14 18.500"/></svg></button>
      <button class="emoji"><svg viewBox="0 0 24 24"><path d="M4 1H6V3H8V5H16V3H18V1H20V5H18V7H21V11H24V15H21V18H18V21H20V24H16V21H8V24H4V21H6V18H3V15H0V11H3V7H6V5H4zM10 0H14V2H10z" fill="#5f4a9e"/><rect x="7" y="9" width="3.500" height="3.500" fill="#3d2a55"/><rect x="13.500" y="9" width="3.500" height="3.500" fill="#3d2a55"/><rect x="9" y="18" width="6" height="2" fill="#fff"/></svg></button>
      <button class="emoji"><svg viewBox="0 0 24 24"><path d="M1 2V10M23 2V10" stroke="#e0607a" stroke-width="1.300"/><circle cx="1" cy="2" r="1.100" fill="#ee3a62"/><circle cx="23" cy="2" r="1.100" fill="#ee3a62"/><rect x="9" y="0" width="6" height="3" rx="1" fill="#f7b32e"/><rect x="1.500" y="3" width="21" height="20.500" rx="4.500" fill="url(#gs)"/><rect x="3" y="6" width="18" height="7.500" rx="3.700" fill="#3d3550"/><rect x="5.500" y="8.500" width="3.500" height="2.500" rx="1" fill="#3ec8f0"/><rect x="15" y="8.500" width="3.500" height="2.500" rx="1" fill="#3ec8f0"/><rect x="9" y="17.500" width="6" height="2.500" rx="1" fill="#4a3a50"/></svg></button>
    </div>
  </section>

  <section class="card">
    <h2 class="card-title">About this tool</h2>
    <p class="about-text">Find and copy any emoji instantly. Browse by category or search by name. Your recent picks are saved locally for quick access.</p>
    <ul class="about-list">
      <li>Hundreds of emojis organized into 9 categories with instant search.</li>
      <li>One-click copy to clipboard with visual feedback and recent history.</li>
      <li>Runs entirely in your browser with no data sent anywhere.</li>
    </ul>
  </section>

  <section class="card">
    <h2 class="card-title">Related tools</h2>
    <div class="related">
      <a class="related-card"></a>
      <a class="related-card"></a>
    </div>
  </section>
</main>
</body>
</html>
```

FILE: styles.css
```css
* { box-sizing: border-box; }
html, body { margin: 0; padding: 0; }
body {
  font-family: "Noto Sans", "Open Sans", sans-serif;
  background: #fff;
  color: #334155;
  font-size: 13px;
  height: 900px;
  overflow: hidden;
}
.defs { position: absolute; width: 0; height: 0; }
.s { fill: none; stroke: #3d2a33; stroke-width: 1.4; stroke-linecap: round; stroke-linejoin: round; }
.t { fill: none; stroke: #3d2a33; stroke-width: .9; stroke-linecap: round; }
.dollar { font: 700 9px "Liberation Sans", sans-serif; fill: #3d2a33; }
.sym { font: 700 5.5px "Liberation Sans", sans-serif; fill: #fff; letter-spacing: 1px; }
.topbar {
  height: 44px;
  background: linear-gradient(90deg, #7c3aed 0%, #2f5ff0 50%, #0891b2 100%);
  box-shadow: 0 4px 20px rgba(15, 23, 42, .2);
}
.topbar-inner {
  width: 1120px;
  height: 44px;
  margin: 0 auto;
  display: flex;
  align-items: center;
  gap: 8px;
  padding-left: 1px;
}
.logo { width: 23px; height: 23px; flex: none; }
.brand { color: #fff; font-size: 18px; font-weight: 500; letter-spacing: -.8px; }
.page { width: 1120px; margin: 0 auto; padding-top: 33px; display: flex; flex-direction: column; gap: 24px; }
.card {
  background: #fff;
  border: 2px solid #e2e8f0;
  border-radius: 16px;
  padding: 20px;
  box-shadow: 0 1px 3px rgba(15, 23, 42, .06);
}
.card-main { padding: 24px; height: 507px; box-shadow: 0 3px 10px rgba(15, 23, 42, .1); }
.tool-title { margin: 1px 0 0; font-size: 23px; line-height: 32px; font-weight: 600; color: #4f46e5; letter-spacing: -.5px; }
.tool-desc { margin: 7px 0 0; font-size: 13px; line-height: 20px; color: #334155; letter-spacing: .08px; }
.search {
  display: block;
  width: 100%;
  height: 42px;
  margin-top: 24px;
  padding: 0 12px;
  border: 1px solid #cbd5e1;
  border-radius: 8px;
  font: inherit;
  outline: none;
}
.search::placeholder { color: #94a3b8; }
.tabs {
  display: flex;
  gap: 2px;
  margin: 15px 0 0 -1px;
  padding-bottom: 7px;
  border-bottom: 1px solid #e2e8f0;
  width: calc(100% + 1px);
}
.tab {
  width: 42.7px;
  height: 38px;
  display: flex;
  align-items: center;
  justify-content: center;
  background: transparent;
  border: 1px solid transparent;
  border-radius: 6px;
  padding: 0;
}
.tab svg { width: 20px; height: 20px; overflow: visible; }
.tab.active { background: #e0e7ff; border-color: #a5b4fc; }
.group-label { margin: 17px 0 0; font-size: 12px; line-height: 16px; font-weight: 500; color: #64748b; letter-spacing: -.25px; }
.count { font-size: 12px; font-weight: 400; color: #94a3b8; letter-spacing: -.6px; }
.emoji-grid {
  display: grid;
  grid-template-columns: repeat(22, 42.95px);
  grid-auto-rows: 42px;
  gap: 4px;
  margin: 9px 0 0 1px;
}
.emoji {
  display: flex;
  align-items: center;
  justify-content: center;
  padding: 0;
  border: 0;
  background: transparent;
}
.emoji svg { width: 24px; height: 24px; overflow: visible; }
.card-title { margin: 3px 0 0; font-size: 18px; line-height: 24px; font-weight: 500; color: #0f172a; letter-spacing: -.4px; }
.about-text { margin: 9px 0 0; line-height: 20px; color: #334155; letter-spacing: .08px; }
.about-list { margin: 12px 0 0; padding: 0 0 0 20px; }
.about-list li { line-height: 20px; margin-bottom: 8px; letter-spacing: .07px; }
.about-list li:last-child { margin-bottom: 0; }
.related { display: grid; grid-template-columns: 532px 532px; gap: 12px; margin-top: 13px; }
.related-card { display: block; height: 120px; border: 2px solid #e5e7eb; border-radius: 12px; }
```
